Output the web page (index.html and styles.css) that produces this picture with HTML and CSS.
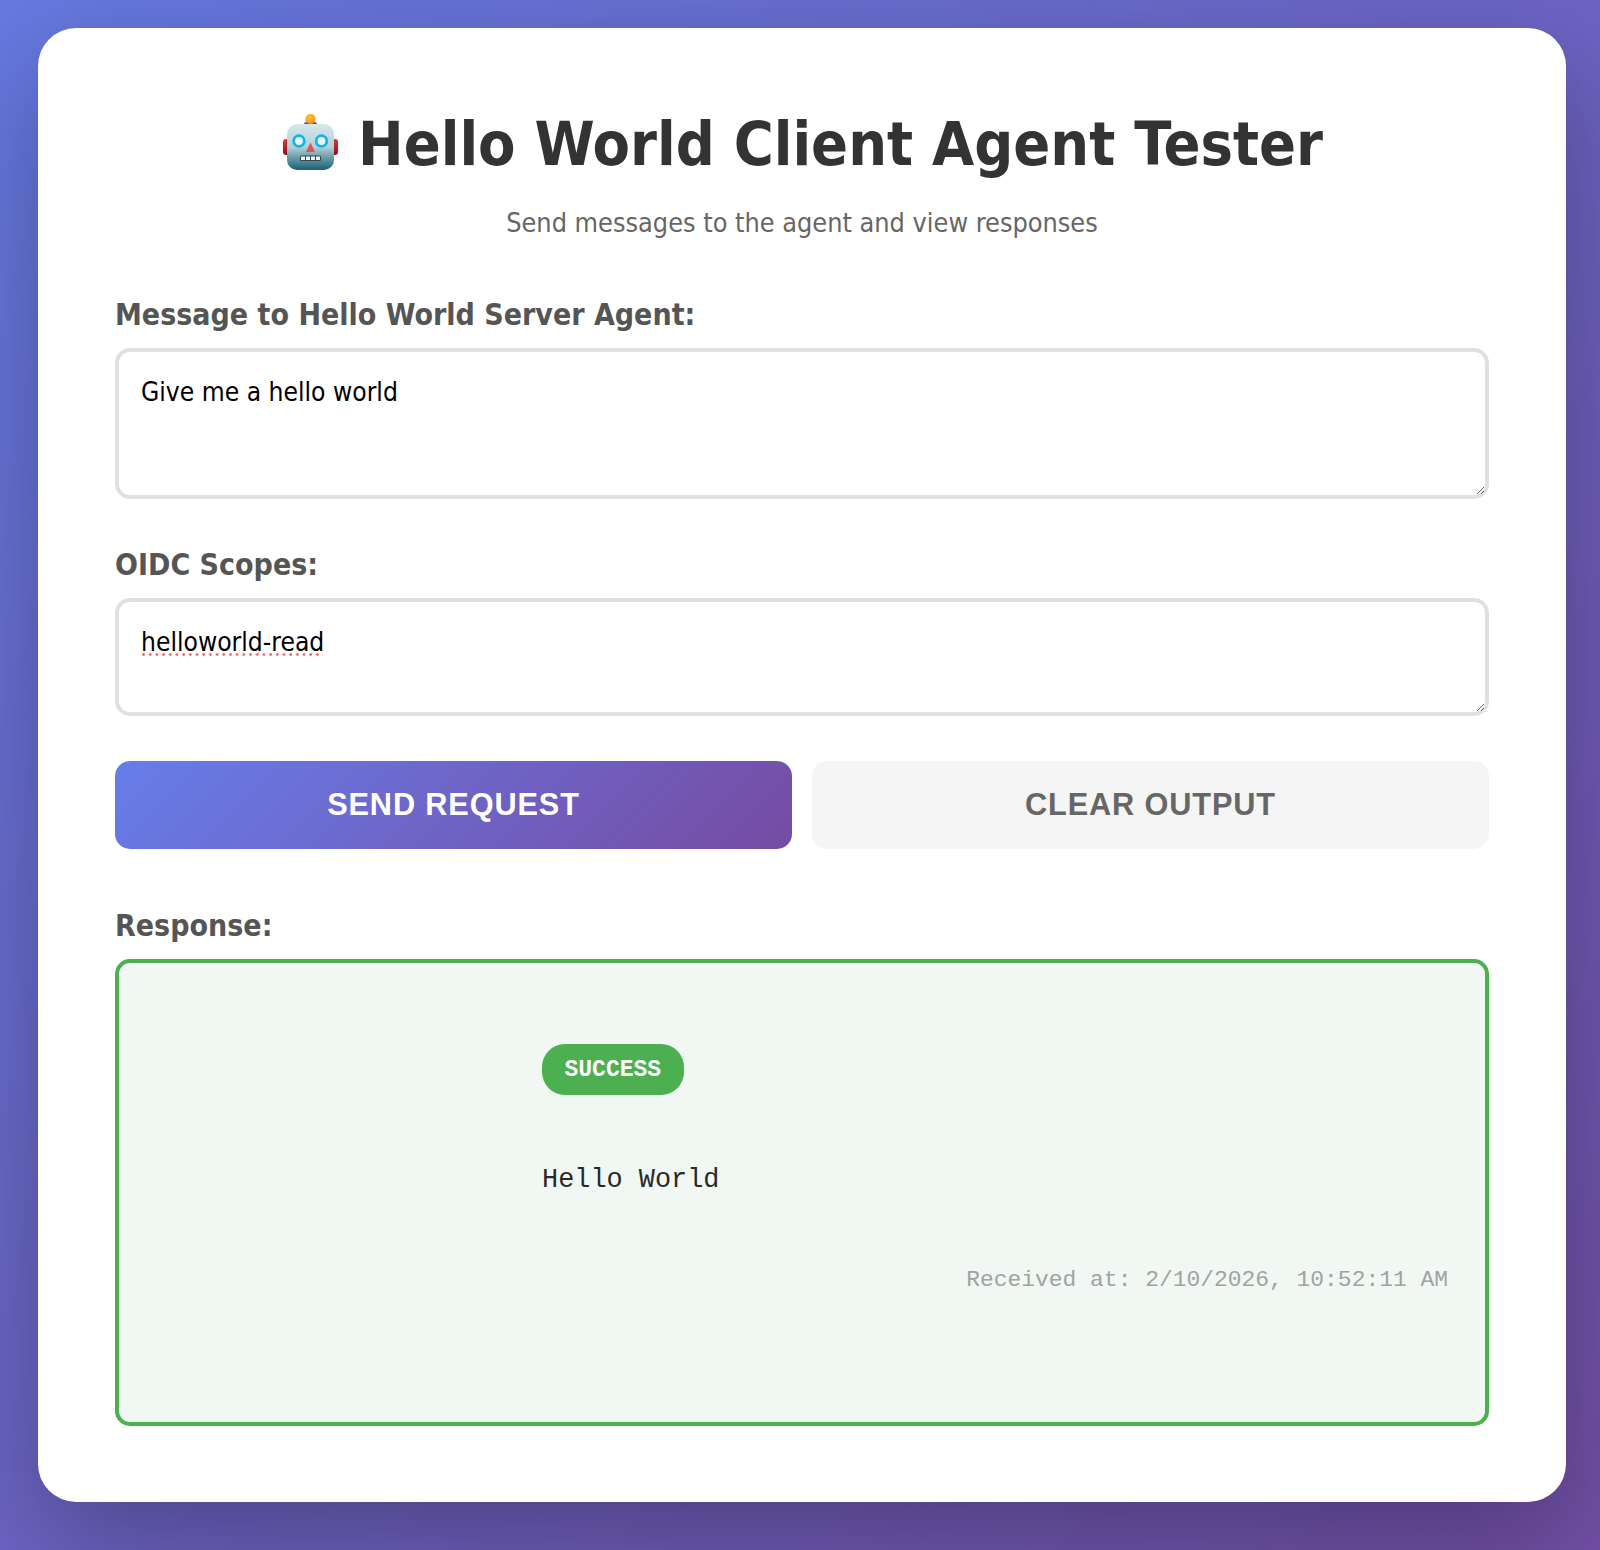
FILE: index.html
```html
<!DOCTYPE html>
<html lang="en">
<head>
<meta charset="utf-8">
<title>Hello World Client Agent Tester</title>
<link rel="stylesheet" href="styles.css">
</head>
<body>
<main class="card">
  <h1 class="title">
    <svg class="robot" viewBox="0 0 56 58" aria-hidden="true">
      <defs>
        <linearGradient id="face" x1="0" y1="0" x2="0" y2="1">
          <stop offset="0" stop-color="#d6e8ec"/>
          <stop offset=".5" stop-color="#b4d0d5"/>
          <stop offset=".78" stop-color="#56929f"/>
          <stop offset="1" stop-color="#1c5f70"/>
        </linearGradient>
        <linearGradient id="ear" x1="0" y1="0" x2="0" y2="1">
          <stop offset="0" stop-color="#e2343c"/>
          <stop offset="1" stop-color="#8f1018"/>
        </linearGradient>
        <radialGradient id="bulb" cx=".45" cy=".35" r=".7">
          <stop offset="0" stop-color="#ffc83a"/>
          <stop offset="1" stop-color="#f58a10"/>
        </radialGradient>
      </defs>
      <rect x="0" y="25" width="9" height="16" rx="3" fill="url(#ear)"/>
      <rect x="46" y="25" width="9" height="16" rx="3" fill="url(#ear)"/>
      <path d="M21 9 Q27.500 5 34 9 Q33.500 14 27.500 14 Q21.500 14 21 9Z" fill="#6a4a9c"/>
      <circle cx="27.500" cy="5" r="5" fill="url(#bulb)"/>
      <rect x="4" y="10" width="47" height="46" rx="10" fill="url(#face)"/>
      <circle cx="16" cy="27" r="5.300" fill="#e8f6f8" stroke="#12b5e6" stroke-width="2.800"/>
      <circle cx="38.500" cy="27" r="5.300" fill="#e8f6f8" stroke="#12b5e6" stroke-width="2.800"/>
      <path d="M27.500 28.500 L32 38 H23Z" fill="#d9545c"/>
      <rect x="17" y="41.500" width="21" height="5.500" rx="1.500" fill="#33474d"/>
      <path d="M18 42.500h4v3.500h-4zM23 42.500h4v3.500h-4zM28 42.500h4v3.500h-4zM33 42.500h4v3.500h-4z" fill="#eef3f3"/>
    </svg>
    <span>Hello World Client Agent Tester</span>
  </h1>
  <p class="subtitle">Send messages to the agent and view responses</p>

  <label class="label label-message" for="message">Message to Hello World Server Agent:</label>
  <textarea class="field field-message" id="message">Give me a hello world</textarea>

  <label class="label label-scopes" for="scopes">OIDC Scopes:</label>
  <div class="field-wrap">
    <textarea class="field field-scopes" id="scopes">helloworld-read</textarea>
    <span class="spell-mark"></span>
  </div>

  <div class="actions">
    <button class="btn btn-send" type="button">Send Request</button>
    <button class="btn btn-clear" type="button">Clear Output</button>
  </div>

  <div class="label label-response">Response:</div>
  <section class="response">
    <span class="badge">SUCCESS</span>
    <div class="message">Hello World</div>
    <div class="time">Received at: 2/10/2026, 10:52:11 AM</div>
  </section>
</main>
</body>
</html>
```
FILE: styles.css
```css
* { box-sizing: border-box; }
html, body { margin: 0; }
body {
  width: 1600px;
  height: 1550px;
  padding: 28px 34px 48px 38px;
  background: linear-gradient(135deg, #667ae2 0%, #724fa6 100%);
  font-family: "DejaVu Sans Condensed", "DejaVu Sans", sans-serif;
}
.card {
  width: 1528px;
  height: 1474px;
  padding: 77px 77px 0;
  background: #fff;
  border-radius: 38px;
  box-shadow: 0 38px 115px rgba(0, 0, 0, .3);
}
.title {
  display: flex;
  justify-content: center;
  align-items: center;
  gap: 19px;
  margin: 0;
  padding-left: 2px;
  height: 78px;
  color: #333;
  font-size: 60.650px;
  font-weight: 700;
  line-height: 78px;
}
.robot { width: 56px; height: 58px; flex: none; margin-bottom: 2px; }
.subtitle {
  margin: 20px 0 0;
  height: 40px;
  color: #666;
  font-size: 26.800px;
  line-height: 40px;
  text-align: center;
}
.label {
  display: block;
  height: 40px;
  margin-top: 40px;
  color: #555;
  font-size: 30px;
  font-weight: 700;
  line-height: 42px;
}
.label-message { margin-top: 51px; }
.field {
  display: block;
  width: 100%;
  margin-top: 14px;
  padding: 23px 22px;
  background: #fff;
  border: 4px solid #e0e0e0;
  border-radius: 15px;
  color: #000;
  font-family: inherit;
  font-size: 26.200px;
  line-height: 34px;
  outline: none;
}
.field-message { height: 151px; }
.field-scopes { height: 118px; }
.field-wrap { position: relative; }
.spell-mark {
  position: absolute;
  left: 27px;
  top: 55px;
  width: 181px;
  height: 3px;
  background: radial-gradient(circle at 1.500px 1.500px, #ef6a6a 1.200px, transparent 1.500px) 0 0 / 6.700px 3px repeat-x;
}
.label-scopes { margin-top: 45px; }
.actions {
  display: grid;
  grid-template-columns: 1fr 1fr;
  gap: 20px;
  margin-top: 45px;
}
.btn {
  height: 88px;
  border: 0;
  border-radius: 15px;
  font-family: "Liberation Sans", Arial, sans-serif;
  font-size: 30.700px;
  font-weight: 700;
  letter-spacing: .880px;
  text-transform: uppercase;
}
.btn-send {
  background: linear-gradient(135deg, #667eea 0%, #764ba2 100%);
  color: #fff;
}
.btn-clear {
  background: #f5f5f5;
  color: #666;
}
.label-response { margin-top: 56px; }
.response {
  height: 467px;
  margin-top: 14px;
  padding: 81px 37px 0 423px;
  background: #f1f8f4;
  border: 4px solid #4caf50;
  border-radius: 15px;
  font-family: "Liberation Mono", "Courier New", monospace;
}
.badge {
  display: inline-block;
  height: 51px;
  padding: 0 22.500px;
  background: #4caf50;
  border-radius: 23px;
  color: #fff;
  font-size: 23px;
  font-weight: 700;
  line-height: 52px;
}
.message {
  margin-top: 67px;
  color: #2a2a2a;
  font-size: 26.880px;
  line-height: 36px;
}
.time {
  margin-top: 66px;
  color: #a2a2a2;
  font-size: 22.950px;
  line-height: 32px;
  text-align: right;
}
```
